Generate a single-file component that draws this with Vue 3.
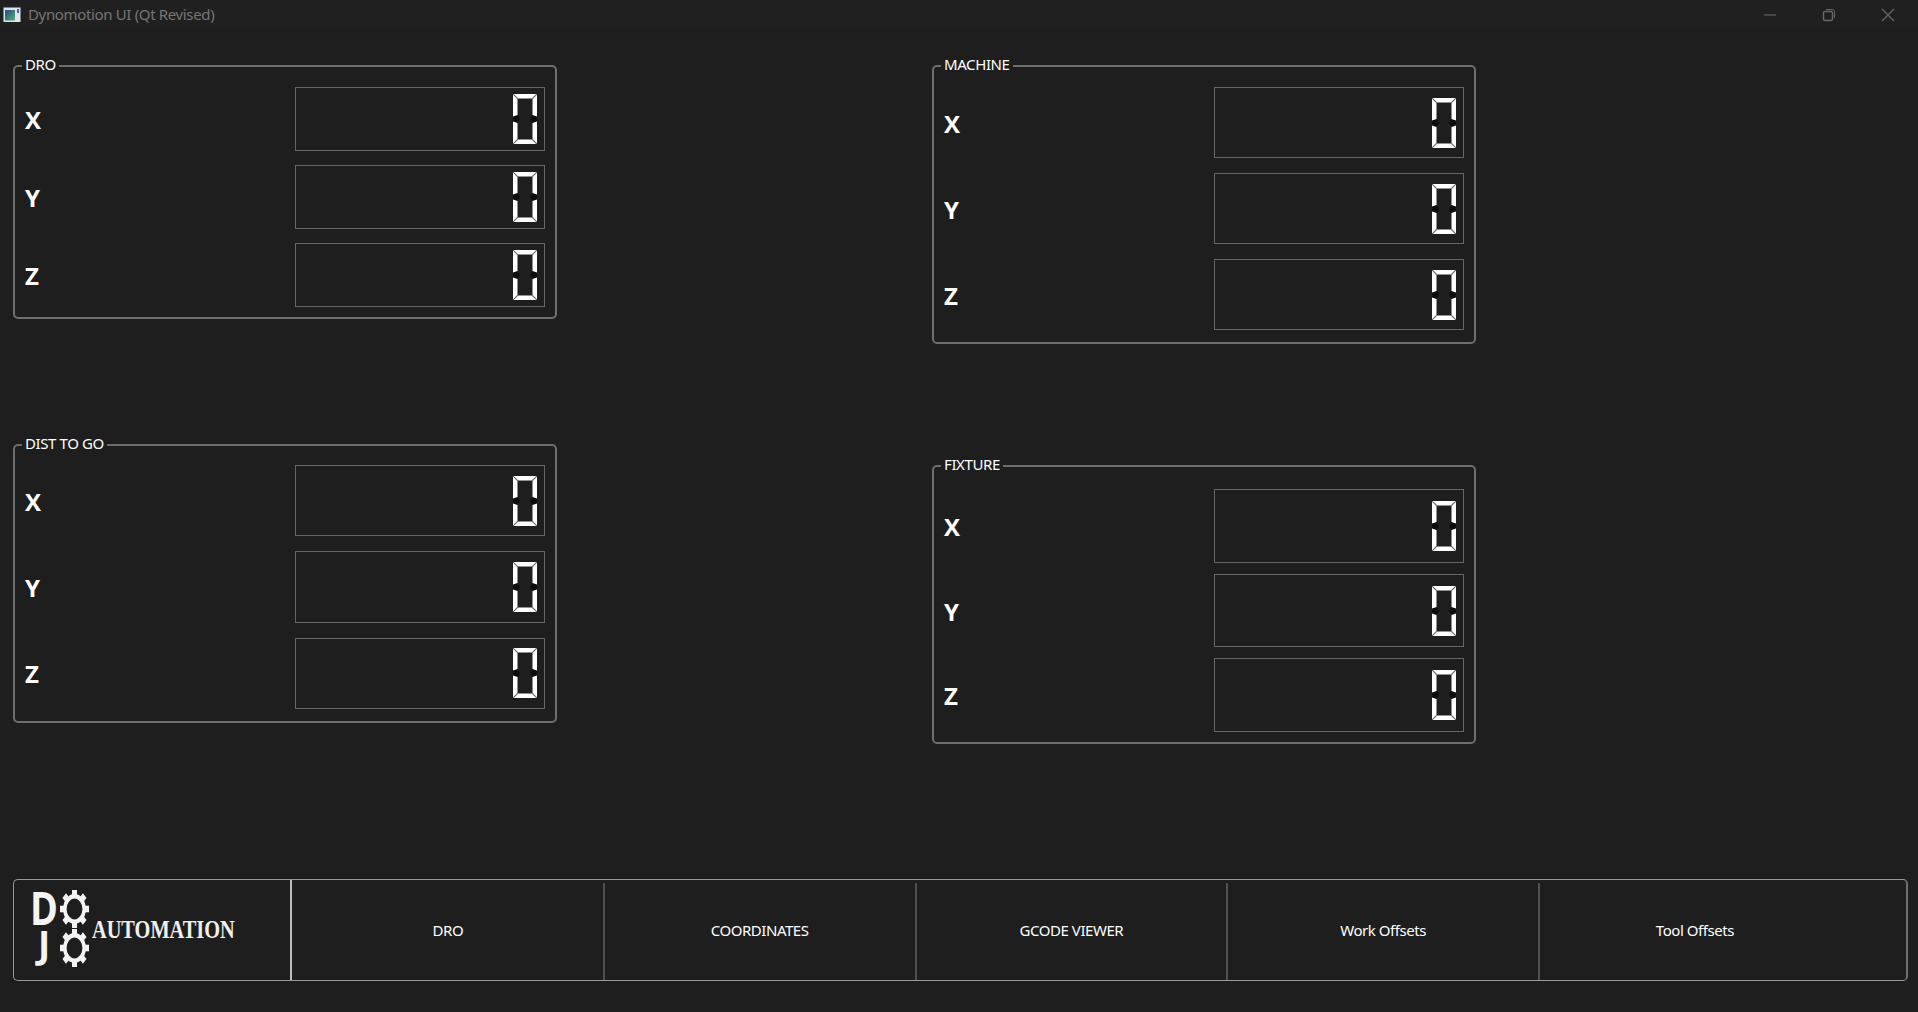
<script setup>
const axes = ['X', 'Y', 'Z']
const leftGroups = [
  { title: 'DRO', cls: 'g-dro' },
  { title: 'DIST TO GO', cls: 'g-dist' },
]
const rightGroups = [
  { title: 'MACHINE', cls: 'g-machine' },
  { title: 'FIXTURE', cls: 'g-fixture' },
]
const columns = [leftGroups, rightGroups]
const buttons = ['DRO', 'COORDINATES', 'GCODE VIEWER', 'Work Offsets', 'Tool Offsets']
const teeth = [0, 45, 90, 135, 180, 225, 270, 315]
</script>

<template>
  <div class="window">
    <header class="titlebar">
      <svg class="app-icon" width="18" height="16" viewBox="0 0 18 16">
        <defs>
          <linearGradient id="appfill" x1="0" y1="0" x2="1" y2="1">
            <stop offset="0" stop-color="#1f4f86" />
            <stop offset="1" stop-color="#5aa878" />
          </linearGradient>
        </defs>
        <rect x="0.5" y="0.5" width="17" height="14.5" fill="#dfe5ea" />
        <rect x="2" y="3" width="10" height="10.5" fill="url(#appfill)" />
        <rect x="14" y="2" width="2" height="4" fill="#2d6fb0" />
      </svg>
      <span class="title-text">Dynomotion UI (Qt Revised)</span>
      <div class="controls">
        <svg class="ctl" width="14" height="14" viewBox="0 0 14 14">
          <path d="M1 7h12" stroke="#6a6a6a" fill="none" />
        </svg>
        <svg class="ctl" width="14" height="14" viewBox="0 0 14 14">
          <rect x="1.5" y="3.5" width="9" height="9" rx="1.5" stroke="#6a6a6a" stroke-width="1.4" fill="none" />
          <path d="M4 1.5h6.5a2 2 0 0 1 2 2V10" stroke="#6a6a6a" fill="none" />
        </svg>
        <svg class="ctl" width="14" height="14" viewBox="0 0 14 14">
          <path d="M1 1l12 12M13 1L1 13" stroke="#6a6a6a" stroke-width="1.1" fill="none" />
        </svg>
      </div>
    </header>

    <main class="panels">
      <div v-for="(col, c) in columns" :key="c" class="column">
        <section v-for="g in col" :key="g.title" class="group" :class="g.cls">
          <span class="legend">{{ g.title }}</span>
          <div v-for="a in axes" :key="a" class="row">
            <span class="axis">{{ a }}</span>
            <div class="lcd">
              <svg class="digit" width="24" height="50" viewBox="0 0 24 50">
                <polygon class="off" points="0,22.5 4.5,21 7,25 4.5,29 0,27.5" />
                <polygon class="off" points="24,22.5 19.5,21 17,25 19.5,29 24,27.5" />
                <polygon class="seg" points="0,0 24,0 19.5,4.5 4.5,4.5" />
                <polygon class="seg" points="0,50 24,50 19.5,45.5 4.5,45.5" />
                <polygon class="seg" points="0,0 4.5,4.5 4.5,21 0,22.5" />
                <polygon class="seg" points="0,50 4.5,45.5 4.5,29 0,27.5" />
                <polygon class="seg" points="24,0 19.5,4.5 19.5,21 24,22.5" />
                <polygon class="seg" points="24,50 19.5,45.5 19.5,29 24,27.5" />
                <path class="mitre" d="M0 0l5 5M24 0l-5 5M0 50l5-5M24 50l-5-5" />
              </svg>
            </div>
          </div>
        </section>
      </div>
    </main>

    <footer class="bar">
      <div class="logo">
        <div class="logo-letters">
          <span class="logo-d">D</span>
          <span class="logo-j">J</span>
        </div>
        <div class="logo-gears">
          <svg v-for="n in 2" :key="n" class="gear" width="29" height="38" viewBox="-15 -15 30 30" preserveAspectRatio="none">
            <rect v-for="t in teeth" :key="t" x="-2.6" y="-15" width="5.2" height="6" fill="#f4f4f4" :transform="`rotate(${t})`" />
            <circle r="10" fill="none" stroke="#f4f4f4" stroke-width="3.6" />
          </svg>
        </div>
        <span class="logo-word">AUTOMATION</span>
      </div>
      <button v-for="b in buttons" :key="b" class="tab">{{ b }}</button>
    </footer>
  </div>
</template>

<style>
html, body { margin: 0; background: #1e1e1e; }
</style>

<style scoped>
.window {
  width: 1918px;
  height: 1012px;
  display: flex;
  flex-direction: column;
  background: #1e1e1e;
  overflow: hidden;
  font-family: "Noto Sans", "Open Sans", sans-serif;
  font-size: 15px;
  font-weight: 400;
  color: #fff;
}
.titlebar {
  height: 29px;
  flex: none;
  display: flex;
  align-items: center;
  background: #202020;
  padding-left: 3px;
  box-sizing: border-box;
}
.app-icon { flex: none; margin-right: 7px; }
.title-text { color: #767676; font-size: 15px; letter-spacing: -0.35px; margin-bottom: 2px; }
.controls {
  margin-left: auto;
  display: flex;
  gap: 45px;
  padding-right: 23px;
  align-items: center;
}
.ctl { display: block; }

.panels {
  display: flex;
  gap: 375px;
  padding: 36px 0 0 13px;
  flex: 1;
}
.column {
  width: 544px;
  display: flex;
  flex-direction: column;
}
.group {
  position: relative;
  height: 279px;
  box-sizing: border-box;
  border: 2px solid #6e6e6e;
  border-radius: 5px;
  display: flex;
  flex-direction: column;
  padding-left: 10px;
  padding-right: 10px;
}
.legend {
  position: absolute;
  top: -13px;
  left: 7px;
  padding: 0 3px;
  background: #1e1e1e;
  line-height: 20px;
  color: #fff;
  letter-spacing: -0.4px;
}
.g-dro { height: 254px; padding-top: 20px; padding-bottom: 10px; gap: 14px; }
.g-dist { margin-top: 125px; padding-top: 19px; padding-bottom: 12px; gap: 15px; }
.g-machine { padding-top: 20px; padding-bottom: 12px; gap: 15px; }
.g-fixture { margin-top: 121px; padding-top: 22px; padding-bottom: 10px; gap: 11px; }
.row {
  flex: 1;
  display: flex;
  align-items: center;
  justify-content: space-between;
}
.axis {
  font-family: "Open Sans", sans-serif;
  font-weight: 700;
  font-size: 24px;
  line-height: 1;
  padding-top: 2px;
}
.lcd {
  width: 250px;
  height: 100%;
  box-sizing: border-box;
  border: 1px solid #666;
  display: flex;
  align-items: center;
  justify-content: flex-end;
  padding-right: 7px;
}
.digit { display: block; }
.seg { fill: #fff; }
.off { fill: #0c0c0c; }
.mitre { stroke: #6f6f6f; stroke-width: 1.1; fill: none; }

.bar {
  flex: none;
  height: 102px;
  margin: 0 10px 31px 13px;
  box-sizing: border-box;
  display: flex;
  border: 1px solid #999;
  border-right: 2px solid #707070;
  border-radius: 5px;
}
.logo {
  width: 278px;
  flex: none;
  box-sizing: border-box;
  display: flex;
  align-items: center;
  border-right: 2px solid #bdbdbd;
  padding-left: 16px;
}
.logo-letters {
  width: 30px;
  flex: none;
  display: flex;
  flex-direction: column;
  margin-bottom: 11px;
  font-family: "Open Sans", sans-serif;
  font-weight: 700;
  color: #f4f4f4;
}
.logo-d {
  font-size: 46px;
  line-height: 39px;
  transform: scaleX(0.82);
  transform-origin: left center;
}
.logo-j { font-size: 37px; line-height: 34px; margin-left: 8px; }
.logo-gears {
  display: flex;
  flex-direction: column;
  gap: 1px;
  flex: none;
  margin-bottom: 3px;
}
.gear { display: block; }
.logo-word {
  font-family: "Liberation Serif", serif;
  font-weight: 700;
  font-size: 26px;
  color: #f0f0f0;
  transform: scaleX(0.782);
  transform-origin: left center;
  margin-left: 3px;
  white-space: nowrap;
}
.tab {
  width: 311.75px;
  flex: none;
  appearance: none;
  background: none;
  border: 0;
  padding: 0;
  font: inherit;
  color: #fff;
  position: relative;
  letter-spacing: -0.45px;
}
.tab::after {
  content: "";
  position: absolute;
  right: -1px;
  top: 3px;
  bottom: 0;
  width: 2px;
  background: #505050;
}
.tab:last-child::after { display: none; }
</style>
